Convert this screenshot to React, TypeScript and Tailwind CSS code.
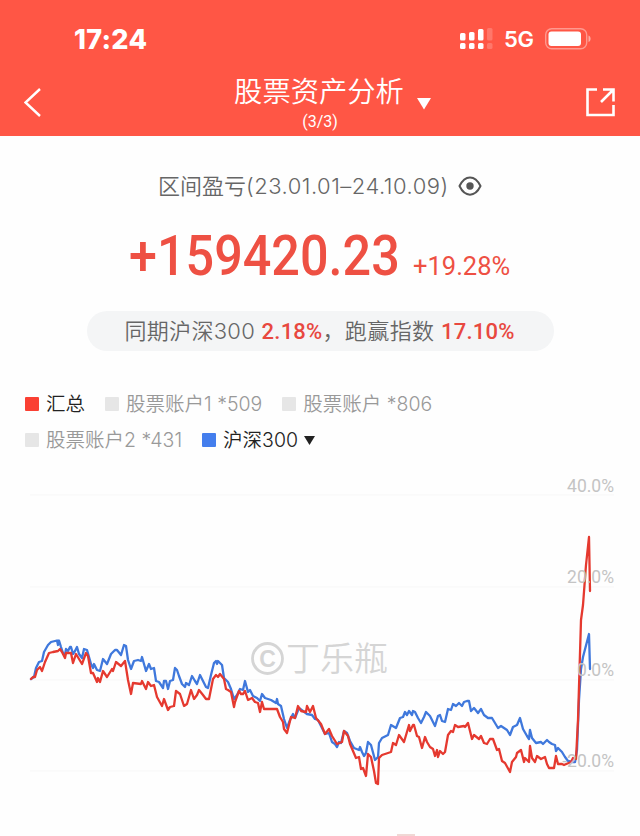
import { ReactNode } from "react";

interface LegendItemProps {
  color: string;
  label: string;
  className?: string;
}

const indexLine =
  "31,679 34,677 36,668 39,662 42,661 44,652 48,645 51,642 57,640.5 58,645 59,640.5 61,647 63,653 65,655 66,649 68,651 70,647 71,647 73,654 75,651 77,647 79,654 82,658 84,649 87,650 89,657 91,664 93,668 94,664 97,670 100,671 103,659 107,664 111,654 115,650 117,650 121,655 124,645 126,646 128,660 131,669 134,661 138,660 141,661 142,657 146,671 149,664 151,669 154,668 156,681 159,682 163,688 164,681 166,681 168,689 170,681 173,680 175,668 177,670 179,676 182,684 185,687 186,683 189,685 192,676 195,681 197,684 200,675 202,679 206,687 208,688 211,675 214,663 216,661 217,664 218,661 222,665 224,678 228,682 231,689 234,699 237,695 240,689 243,690 245,681 248,692 250,690 253,696 257,698 260,701 262,694 265,698 271,700 276,703 277,699 278,704 281,706 284,719 287,728 290,720 293,714 295,718 299,708 303,711 307,714 312,715 315,719 318,720 321,726 325,734 329,733 332,742 335,744 337,747 339,742 341,743 344,731 347,733 350,741 354,748 359,750 360,747 362,752 364,756 366,753 368,742 371,745 375,760 378,757 379,743 382,738 388,735 391,725 396,728 400,718 403,717 405,712 407,715 409,711 412,715 413,711 415,712 418,718 421,723 424,717 426,712 430,716 435,726 438,716 440,715 442,721 445,722 448,709 451,710 453,704 456,706 459,703 462,706 464,702 467,701 469,701 471,711 474,708 478,713 481,709 484,715 488,718 492,718 498,728 501,726 507,730 510,735 513,727 517,725 520,718 523,729 527,736 529,739 530,730 532,738 536,743 541,742 543,744 547,740 549,742 552,744 555,745 556,751 558,748 562,752 565,757 568,761 573,762 575,762 577,750 579,700 581,669 583,657 589,634 590,669";

const totalLine =
  "31,679 33,677 35,677 37,670 40,667 42,671 45,662 49,653 53,652 58,651 60,649 62,652 65,658 66,653 71,653 73,663 76,654 79,659 82,664 86,653 88,656 91,673 93,673 97,682 98,678 100,682 103,671 107,677 112,669 113,671 116,662 121,666 125,661 128,680 131,694 133,683 141,684 142,681 146,689 148,682 151,686 154,685 157,697 162,706 164,699 168,710 170,707 174,706 176,691 180,694 184,706 187,704 191,690 194,699 197,695 199,690 203,695 206,699 209,699 213,679 216,675 218,677 220,674 224,679 226,689 228,690 231,692 234,707 235,702 239,691 241,694 243,694 245,691 248,700 252,698 255,702 258,703 260,712 262,702 264,709 277,709 280,717 283,722 284,729 287,733 291,717 295,718 298,706 301,711 306,712 307,706 310,712 313,706 316,718 321,724 325,734 329,729 332,736 337,744 342,742 344,731 348,736 350,744 353,751 356,758 359,757 361,769 363,768 366,776 368,754 371,757 374,771 376,783 378,784 379,758 382,755 391,752 393,743 396,745 399,735 404,742 409,725 410,731 413,725 414,725 417,736 419,737 422,748 425,737 427,742 430,747 433,749 435,756 437,750 438,757 440,751 443,754 445,752 448,735 451,731 453,732 455,725 458,727 464,726 465,727 468,723 470,731 472,739 474,735 479,739 481,736 484,743 487,744 490,739 493,739 497,750 499,749 502,761 505,763 510,772 512,762 516,757 517,753 521,750 524,762 525,758 529,762 530,746 532,758 535,762 537,756 541,759 545,757 547,764 549,768 554,768 556,756 558,764 562,764 564,765 571,762 573,758 576,759 578,720 581,620 583,605 586,565 589,537 590,591";

const axisLabels = [
  { label: "40.0%", y: 492 },
  { label: "20.0%", y: 583 },
  { label: "0.0%", y: 676 },
  { label: "-20.0%", y: 767 },
];

function StatusBar() {
  return (
    <div className="flex h-[78px] items-center pl-[74px] pr-[48px]">
      <span className="font-['Inter'] text-[27px] font-extrabold leading-none tracking-[0.3px]">17:24</span>
      <div className="ml-auto flex items-center">
        <svg width="34" height="22" viewBox="0 0 34 22" fill="currentColor">
          <rect x="0" y="5" width="5.5" height="7.500" rx="1.5" />
          <rect x="9" y="4" width="5.5" height="8.500" rx="1.5" />
          <rect x="18" y="1" width="5.5" height="11.500" rx="1.5" />
          <rect x="27" y="0" width="5.5" height="12.500" rx="1.5" opacity=".2" />
          <rect x="0" y="15" width="5.5" height="6" rx="1.5" />
          <rect x="9" y="15" width="5.5" height="6" rx="1.5" />
          <rect x="18" y="15" width="5.5" height="6" rx="1.5" />
          <rect x="27" y="15" width="5.5" height="6" rx="1.5" opacity=".2" />
        </svg>
        <span className="ml-[10px] w-[30px] font-['Inter'] text-[22px] font-semibold leading-none tracking-[-0.3px]">5G</span>
        <svg className="ml-[11px]" width="47" height="22" viewBox="0 0 47 22">
          <rect x="0.7" y="0.7" width="41" height="20" rx="6" fill="none" stroke="#fff" strokeOpacity=".4" strokeWidth="1.4" />
          <rect x="3.5" y="3.5" width="32.5" height="14.5" rx="3" fill="#fff" />
          <path d="M43.5 7.5c2.8 1 2.8 5.5 0 6.5z" fill="#fff" opacity=".5" />
        </svg>
      </div>
    </div>
  );
}

function TitleBar() {
  return (
    <div className="flex h-[58px] items-start px-6">
      <svg className="mt-[9px]" width="20" height="30" viewBox="0 0 20 30" fill="none" stroke="currentColor" strokeWidth="2.4">
        <path d="M16 2 1.5 15.5 16 29" />
      </svg>
      <div className="ml-[190px] flex w-[170px] flex-col items-center">
        <h1 className="-mt-[5px] whitespace-nowrap text-[28.3px] font-[350] leading-[38px]">股票资产分析</h1>
        <span className="mt-[3px] pl-[2px] font-['Roboto'] text-[16px] leading-4">(3/3)</span>
      </div>
      <svg className="ml-[13px] mt-[20px]" width="14" height="12" viewBox="0 0 14 12" fill="currentColor">
        <path d="M0 0h14L7 11.5z" />
      </svg>
      <svg className="ml-auto mt-[9px]" width="31" height="30" viewBox="0 0 31 30" fill="none" stroke="currentColor" strokeWidth="2.6">
        <path d="M12 2.5H2.5V28h26V18M18 2.5h10.5v12M28 3 16 15" />
      </svg>
    </div>
  );
}

function LegendItem({ color, label, className = "text-[#999]" }: LegendItemProps) {
  return (
    <div className={"flex items-center gap-[7px] whitespace-nowrap " + className}>
      <i className={"size-[14px] rounded-[1px] " + color} />
      <span>{label}</span>
    </div>
  );
}

function Highlight({ children }: { children: ReactNode }) {
  return <b className="font-['Roboto'] text-[22px] font-medium tracking-[0.2px] text-[#e8483f]">{children}</b>;
}

function Chart() {
  return (
    <svg className="block" width="640" height="346" viewBox="0 460 640 346">
      {[495, 587, 680, 771].map((y) => (
        <line key={y} x1="30" x2="614" y1={y} y2={y} stroke="#f7f7f7" />
      ))}
      <g fill="#d5d5d5">
        <circle cx="267.5" cy="658.5" r="15" fill="none" stroke="#d5d5d5" strokeWidth="2.8" />
        <text x="267.5" y="666.5" fontSize="23" textAnchor="middle" className="font-['Liberation_Sans'] font-bold">C</text>
        <text x="286" y="671" fontSize="34" textLength="102" className="font-[350]">丁乐瓶</text>
      </g>
      <g fill="none" strokeWidth="2.3" strokeLinejoin="round" strokeLinecap="round">
        <polyline points={indexLine} stroke="#3f78dc" />
        <polyline points={totalLine} stroke="#e5392f" />
      </g>
      <g className="font-['Roboto']" fill="#c4c4c4" fontSize="17.5" textAnchor="end">
        {axisLabels.map((item) => (
          <text key={item.label} x="614" y={item.y}>{item.label}</text>
        ))}
      </g>
    </svg>
  );
}

export default function App() {
  return (
    <main className="h-[836px] w-[640px] overflow-hidden bg-[#fefefe] font-['Inter','Noto_Sans_CJK_SC',sans-serif] [font-feature-settings:'calt'_0]">
      <header className="h-[136px] bg-[#ff5645] text-white">
        <StatusBar />
        <TitleBar />
      </header>

      <section className="flex h-[216px] flex-col items-center">
        <div className="mt-[35px] flex h-[30px] w-full items-center pl-[158px] text-[22px] font-[350] text-[#666]">
          <span className="whitespace-nowrap">
            区间盈亏<span className="tracking-[0.5px]">(23.01.01–24.10.09)</span>
          </span>
          <svg className="ml-[9px]" width="24" height="20" viewBox="0 0 24 20" fill="none" stroke="#555" strokeWidth="2">
            <path d="M1.5 10C7-1.5 17-1.5 22.5 10 17 21.5 7 21.5 1.5 10z" strokeLinejoin="round" />
            <circle cx="12" cy="10" r="3.7" fill="#555" stroke="none" />
          </svg>
        </div>
        <div className="mt-[23px] flex h-[64px] w-full items-baseline pl-[129px] font-['Roboto'] font-medium text-[#ee5043]">
          <span className="w-[284px] origin-left scale-x-[0.915] text-[55px] leading-[64px]">+159420.23</span>
          <span className="text-[25.5px] font-normal">+19.28%</span>
        </div>
        <div className="mt-[23px] flex h-10 w-[467px] items-center whitespace-pre rounded-full bg-[#f4f5f6] pl-[38px] text-[22px] font-[350] text-[#666]">
          <span className="tracking-[0.3px]">同期沪深300 </span>
          <Highlight>2.18%</Highlight>
          <span className="tracking-[0.4px]">，跑赢指数 </span>
          <Highlight>17.10%</Highlight>
        </div>
      </section>

      <section className="h-[108px] pl-[25px] pt-[34px] text-[19.5px] font-[350] leading-9">
        <div className="flex gap-[20px]">
          <LegendItem color="bg-[#fa4033]" label="汇总" className="text-[#222]" />
          <LegendItem color="bg-[#e6e6e6]" label="股票账户1 *509" />
          <LegendItem color="bg-[#e6e6e6]" label="股票账户 *806" />
        </div>
        <div className="flex items-center gap-[20px]">
          <LegendItem color="bg-[#e6e6e6]" label="股票账户2 *431" />
          <LegendItem color="bg-[#447eed]" label="沪深300" className="text-[#222]" />
          <svg className="-ml-[14px]" width="11" height="9" viewBox="0 0 11 9" fill="#222">
            <path d="M0 0h11L5.5 9z" />
          </svg>
        </div>
      </section>

      <Chart />
      <div className="flex h-[30px] items-end pl-[397px]">
        <i className="h-[2px] w-[18px] bg-[#f0d8d5]" />
      </div>
    </main>
  );
}
